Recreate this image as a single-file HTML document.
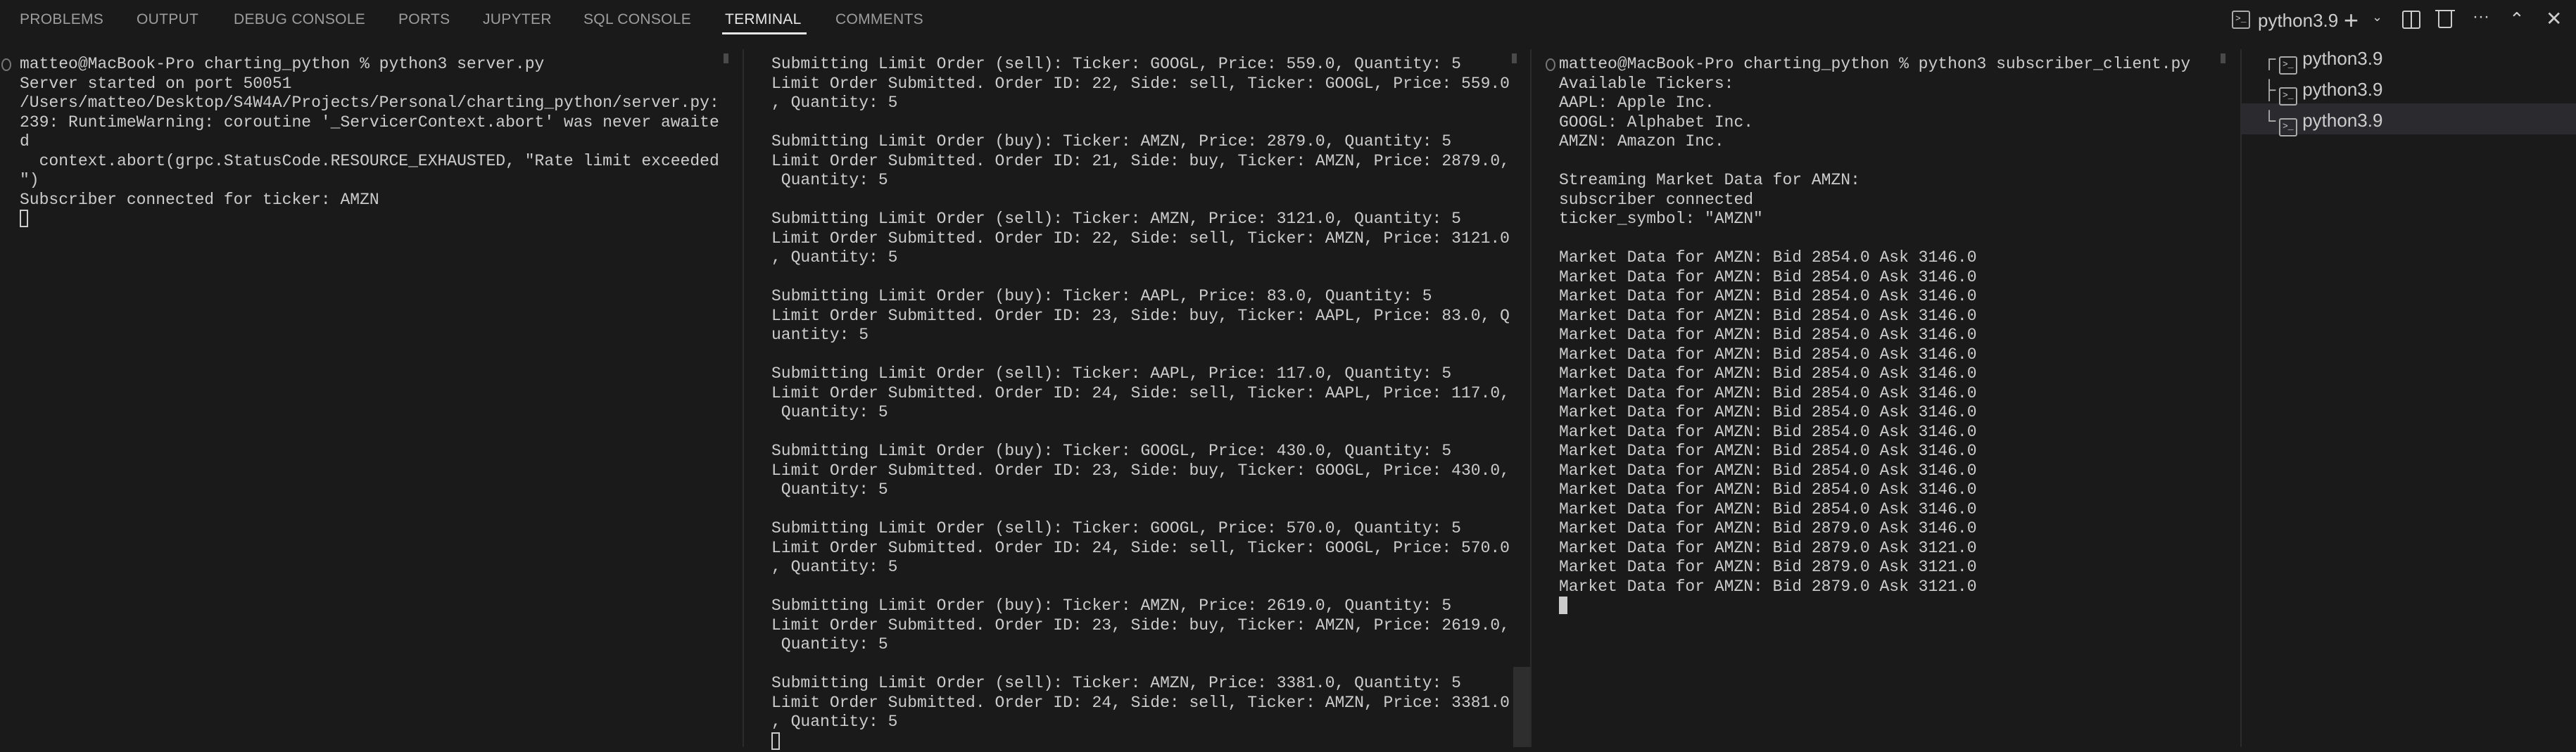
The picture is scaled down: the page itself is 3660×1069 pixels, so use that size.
<!DOCTYPE html>
<html><head><meta charset="utf-8"><style>
*{margin:0;padding:0;box-sizing:border-box}
body{width:3660px;height:1062px;background:#1a1a1a;overflow:hidden;position:relative;font-family:"Liberation Mono",monospace;color:#cccccc}
.tabs{position:absolute;top:0;left:0;height:56px;width:3660px;font-family:"Liberation Sans",sans-serif;font-size:21px;color:#9d9d9d}
.tabs span{position:absolute;top:16px;letter-spacing:0.3px}
.tabs .act{color:#e7e7e7}
.ul{position:absolute;left:1026px;top:46px;width:120px;height:3px;background:#e7e7e7}
pre{position:absolute;top:78px;font-family:"Liberation Mono",monospace;font-size:23px;line-height:27.5px;color:#cccccc;white-space:pre}
.vl{position:absolute;top:70px;bottom:0;width:2px;background:#2b2b2b}
.cur{display:inline-block;width:12px;height:25px;border:2px solid #cccccc;vertical-align:-5px}
.circ{position:absolute;width:14px;height:18px;border:2px solid #777;border-radius:50%}
.thumb{position:absolute;background:#4a4a4a}
.tl{position:absolute;font-family:"Liberation Sans",sans-serif;font-size:26px;line-height:30px;color:#cccccc}
.ti{display:inline-block;width:26px;height:26px;border:2px solid #aaa;border-radius:3px;font-size:13px;line-height:20px;text-align:left;padding-left:3px;color:#ccc;vertical-align:-3px;font-family:"Liberation Mono",monospace}
.ic{position:absolute;color:#cccccc;font-family:"Liberation Sans",sans-serif}
</style></head><body>
<div class="tabs">
<span style="left:28px">PROBLEMS</span>
<span style="left:194px">OUTPUT</span>
<span style="left:332px">DEBUG CONSOLE</span>
<span style="left:566px">PORTS</span>
<span style="left:686px">JUPYTER</span>
<span style="left:829px">SQL CONSOLE</span>
<span class="act" style="left:1030px">TERMINAL</span>
<span style="left:1187px">COMMENTS</span>
</div>
<div class="ul"></div>

<div class="ic" style="left:3171px;top:14px"><span class="ti">&gt;_</span></div>
<div class="ic" style="left:3208px;top:14px;font-size:26px">python3.9</div>
<div class="ic" style="left:3330px;top:8px;font-size:36px;font-weight:300">+</div>
<div class="ic" style="left:3370px;top:14px;font-size:18px">&#8964;</div>
<div class="ic" style="left:3413px;top:15px;width:26px;height:26px;border:2px solid #ccc;border-radius:3px"><div style="position:absolute;left:10px;top:0;width:2px;height:22px;background:#ccc"></div></div>
<div class="ic" style="left:3464px;top:16px;width:20px;height:24px;border:2px solid #ccc;border-top:none;border-radius:0 0 3px 3px"></div>
<div class="ic" style="left:3460px;top:14px;width:28px;height:2px;background:#ccc"></div>
<div class="ic" style="left:3513px;top:10px;font-size:24px">···</div>
<div class="ic" style="left:3565px;top:12px;font-size:26px">&#8963;</div>
<div class="ic" style="left:3617px;top:10px;font-size:28px">✕</div>

<div class="circ" style="left:2px;top:83px"></div>
<pre style="left:28px">matteo@MacBook-Pro charting_python % python3 server.py
Server started on port 50051
/Users/matteo/Desktop/S4W4A/Projects/Personal/charting_python/server.py:
239: RuntimeWarning: coroutine '_ServicerContext.abort' was never awaite
d
  context.abort(grpc.StatusCode.RESOURCE_EXHAUSTED, "Rate limit exceeded
")
Subscriber connected for ticker: AMZN
<span class="cur"></span></pre>
<div class="thumb" style="left:1028px;top:76px;width:7px;height:14px"></div>
<div class="vl" style="left:1055px"></div>

<pre style="left:1096px">Submitting Limit Order (sell): Ticker: GOOGL, Price: 559.0, Quantity: 5
Limit Order Submitted. Order ID: 22, Side: sell, Ticker: GOOGL, Price: 559.0
, Quantity: 5

Submitting Limit Order (buy): Ticker: AMZN, Price: 2879.0, Quantity: 5
Limit Order Submitted. Order ID: 21, Side: buy, Ticker: AMZN, Price: 2879.0,
 Quantity: 5

Submitting Limit Order (sell): Ticker: AMZN, Price: 3121.0, Quantity: 5
Limit Order Submitted. Order ID: 22, Side: sell, Ticker: AMZN, Price: 3121.0
, Quantity: 5

Submitting Limit Order (buy): Ticker: AAPL, Price: 83.0, Quantity: 5
Limit Order Submitted. Order ID: 23, Side: buy, Ticker: AAPL, Price: 83.0, Q
uantity: 5

Submitting Limit Order (sell): Ticker: AAPL, Price: 117.0, Quantity: 5
Limit Order Submitted. Order ID: 24, Side: sell, Ticker: AAPL, Price: 117.0,
 Quantity: 5

Submitting Limit Order (buy): Ticker: GOOGL, Price: 430.0, Quantity: 5
Limit Order Submitted. Order ID: 23, Side: buy, Ticker: GOOGL, Price: 430.0,
 Quantity: 5

Submitting Limit Order (sell): Ticker: GOOGL, Price: 570.0, Quantity: 5
Limit Order Submitted. Order ID: 24, Side: sell, Ticker: GOOGL, Price: 570.0
, Quantity: 5

Submitting Limit Order (buy): Ticker: AMZN, Price: 2619.0, Quantity: 5
Limit Order Submitted. Order ID: 23, Side: buy, Ticker: AMZN, Price: 2619.0,
 Quantity: 5

Submitting Limit Order (sell): Ticker: AMZN, Price: 3381.0, Quantity: 5
Limit Order Submitted. Order ID: 24, Side: sell, Ticker: AMZN, Price: 3381.0
, Quantity: 5
<span class="cur"></span></pre>
<div class="thumb" style="left:2148px;top:76px;width:7px;height:14px"></div>
<div class="thumb" style="left:2150px;top:948px;width:24px;height:114px;background:#2e2e2e"></div>
<div class="vl" style="left:2174px"></div>

<div class="circ" style="left:2196px;top:83px"></div>
<pre style="left:2215px">matteo@MacBook-Pro charting_python % python3 subscriber_client.py
Available Tickers:
AAPL: Apple Inc.
GOOGL: Alphabet Inc.
AMZN: Amazon Inc.

Streaming Market Data for AMZN:
subscriber connected
ticker_symbol: "AMZN"

Market Data for AMZN: Bid 2854.0 Ask 3146.0
Market Data for AMZN: Bid 2854.0 Ask 3146.0
Market Data for AMZN: Bid 2854.0 Ask 3146.0
Market Data for AMZN: Bid 2854.0 Ask 3146.0
Market Data for AMZN: Bid 2854.0 Ask 3146.0
Market Data for AMZN: Bid 2854.0 Ask 3146.0
Market Data for AMZN: Bid 2854.0 Ask 3146.0
Market Data for AMZN: Bid 2854.0 Ask 3146.0
Market Data for AMZN: Bid 2854.0 Ask 3146.0
Market Data for AMZN: Bid 2854.0 Ask 3146.0
Market Data for AMZN: Bid 2854.0 Ask 3146.0
Market Data for AMZN: Bid 2854.0 Ask 3146.0
Market Data for AMZN: Bid 2854.0 Ask 3146.0
Market Data for AMZN: Bid 2854.0 Ask 3146.0
Market Data for AMZN: Bid 2879.0 Ask 3146.0
Market Data for AMZN: Bid 2879.0 Ask 3121.0
Market Data for AMZN: Bid 2879.0 Ask 3121.0
Market Data for AMZN: Bid 2879.0 Ask 3121.0
<span class="cur" style="background:#ccc"></span></pre>
<div class="thumb" style="left:3155px;top:76px;width:7px;height:14px"></div>
<div class="vl" style="left:3183px;background:#2b2b2b"></div>

<div style="position:absolute;left:3185px;top:147px;width:475px;height:44px;background:#2b2b2f"></div>
<div class="tl" style="left:3215px;top:68px;color:#aaa">┌</div>
<div class="tl" style="left:3215px;top:112px;color:#aaa">├</div>
<div class="tl" style="left:3215px;top:156px;color:#aaa">└</div>
<div class="tl" style="left:3238px;top:68px"><span class="ti">&gt;_</span> python3.9</div>
<div class="tl" style="left:3238px;top:112px"><span class="ti">&gt;_</span> python3.9</div>
<div class="tl" style="left:3238px;top:156px"><span class="ti">&gt;_</span> python3.9</div>
</body></html>
